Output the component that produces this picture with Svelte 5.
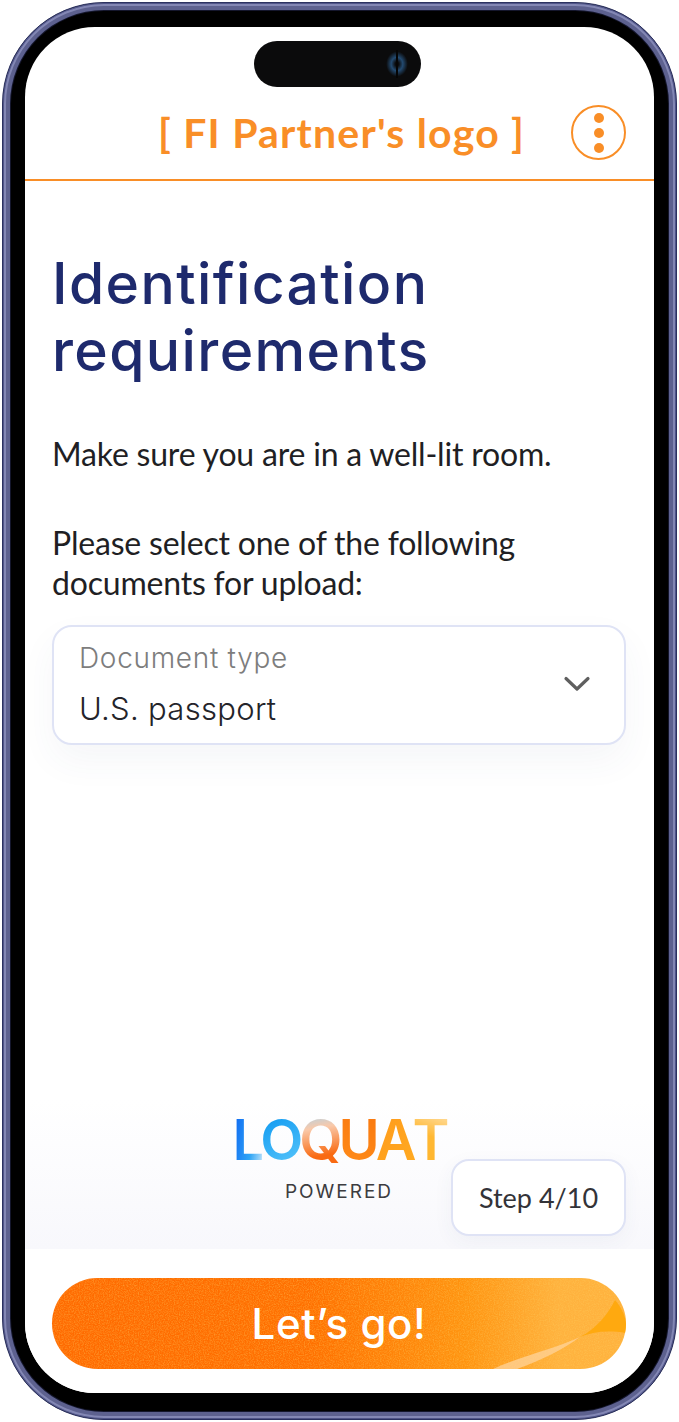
<script>
  // 본인확인 서류 선택 화면
  let docType = 'U.S. passport';
  const step = { current: 4, total: 10 };

  const logoLetters = [
    { ch: 'L', cls: 'l-blue' },
    { ch: 'O', cls: 'l-cyan' },
    { ch: 'Q', cls: 'l-mix' },
    { ch: 'U', cls: 'l-orange' },
    { ch: 'A', cls: 'l-amber' },
    { ch: 'T', cls: 'l-yellow' }
  ];
</script>

<div class="page">
  <div class="phone">
    <div class="screen">
      <!-- dynamic island -->
      <div class="island"><span class="lens"></span></div>

      <header class="top">
        <span class="partner">[ FI Partner's logo ]</span>
        <button class="kebab" aria-label="menu">
          <i></i><i></i><i></i>
        </button>
      </header>

      <main class="content">
        <h1 class="title">Identification requirements</h1>
        <p class="lead">Make sure you are in a well-lit room.</p>
        <p class="ask">Please select one of the following documents for upload:</p>

        <div class="select">
          <div class="select-text">
            <span class="select-label">Document type</span>
            <span class="select-value">{docType}</span>
          </div>
          <svg class="chevron" width="28" height="18" viewBox="0 0 28 18" fill="none">
            <path d="M3 3.5 L14 14 L25 3.5" stroke="#5f5f5f" stroke-width="3.2" stroke-linecap="round" stroke-linejoin="round" />
          </svg>
        </div>

        <div class="bottom-row">
          <div></div>
          <div class="brand">
            <div class="wordmark">
              {#each logoLetters as l}
                <span class={l.cls}>{l.ch}</span>
              {/each}
            </div>
            <span class="powered">POWERED</span>
          </div>
          <div class="step">Step {step.current}/{step.total}</div>
        </div>
      </main>

      <footer class="actions">
        <button class="go">
          <svg class="go-bg" viewBox="0 0 574 91" preserveAspectRatio="none" aria-hidden="true">
            <defs>
              <filter id="grain">
                <feTurbulence type="fractalNoise" baseFrequency="0.8" numOctaves="2" seed="4" />
                <feColorMatrix values="0 0 0 0 1  0 0 0 0 0.62  0 0 0 0 0.12  0 0 0 1.8 -0.66" />
              </filter>
            </defs>
            <rect width="574" height="91" filter="url(#grain)" opacity="0.45" />
            <path d="M528 59 C545 50 556 36 563 22 C570 30 574 40 574 46 L574 55 C555 52 540 54 528 59 Z" fill="#ffa90f" />
            <path d="M441 91 C470 78 505 70 528 59 C510 72 490 82 465 91 Z" fill="#ffd39a" opacity="0.75" />
          </svg>
          <span class="go-label">Let’s go!</span>
        </button>
      </footer>
    </div>
  </div>
</div>

<style>
  :global(body) {
    margin: 0;
    background: #fff;
  }

  .page {
    width: 679px;
    height: 1422px;
    padding: 2px;
    box-sizing: border-box;
  }

  .phone {
    height: 100%;
    box-sizing: border-box;
    padding: 24px 22px 26px 22px;
    border-radius: 102px;
    background: #000;
    border: 1px solid #2b3160;
    box-shadow:
      inset 0 0 0 1px #4f5488,
      inset 0 0 0 3px #8387b4,
      inset 0 0 0 7px #5d618f,
      inset 0 0 0 8px #14162c;
  }

  .screen {
    position: relative;
    height: 100%;
    background: #fff;
    border-radius: 70px;
    overflow: hidden;
    display: flex;
    flex-direction: column;
    font-family: "Lato", "Open Sans", sans-serif;
  }

  .island {
    position: absolute;
    top: 14px;
    left: 229px;
    width: 167px;
    height: 46px;
    border-radius: 23px;
    background: #0b0b0c;
  }

  .lens {
    position: absolute;
    right: 12px;
    top: 9px;
    width: 24px;
    height: 28px;
    border-radius: 50%;
    background:
      linear-gradient(90deg, transparent 45%, #050505 45% 55%, transparent 55%),
      radial-gradient(ellipse closest-side, #0b0b0c 15%, #234a70 48%, #0b0b0c 90%);
  }

  .top {
    height: 154px;
    flex: none;
    box-sizing: border-box;
    border-bottom: 2px solid #f98e27;
    padding: 76px 28px 0 133px;
    display: flex;
    align-items: flex-start;
    justify-content: space-between;
  }

  .partner {
    font-size: 41px;
    line-height: 60px;
    font-weight: 700;
    color: #f98e27;
    letter-spacing: 1.2px;
    white-space: nowrap;
  }

  .kebab {
    width: 55px;
    height: 55px;
    margin-top: 2px;
    padding: 0;
    box-sizing: border-box;
    border: 2px solid #f98e27;
    border-radius: 50%;
    background: #fff;
    display: flex;
    flex-direction: column;
    align-items: center;
    justify-content: center;
    gap: 5px;
  }

  .kebab i {
    width: 10px;
    height: 10px;
    border-radius: 50%;
    background: #f98e27;
  }

  .content {
    flex: 1;
    min-height: 0;
    padding: 0 28px 13px 27px;
    display: flex;
    flex-direction: column;
    background: linear-gradient(#fff 0, #fff 86%, #f8f8fc 100%);
  }

  .title {
    margin: 69px 0 0;
    font-size: 57px;
    line-height: 67px;
    font-weight: 500;
    color: #1e2a6d;
    font-family: "Inter", sans-serif;
    letter-spacing: 1.4px;
    max-width: 460px;
  }

  .lead,
  .ask {
    color: #1f1f24;
    font-size: 32px;
    line-height: 40px;
    letter-spacing: -0.2px;
  }

  .lead {
    margin: 50px 0 0;
  }

  .ask {
    margin: 49px 0 0;
    max-width: 510px;
  }

  .select {
    margin-top: 22px;
    height: 120px;
    box-sizing: border-box;
    padding: 0 33px 0 25px;
    border: 2px solid #dfe3f5;
    border-radius: 20px;
    background: #fff;
    box-shadow: 0 16px 36px rgba(60, 70, 120, 0.05);
    display: flex;
    align-items: center;
    justify-content: space-between;
  }

  .select-text {
    display: flex;
    flex-direction: column;
    font-family: "Inter", sans-serif;
  }

  .select-label {
    font-size: 28px;
    line-height: 38px;
    font-weight: 300;
    color: #7d7d7d;
    letter-spacing: 0.7px;
    margin-bottom: 13px;
    margin-top: -4px;
  }

  .select-value {
    font-size: 31px;
    line-height: 38px;
    font-weight: 300;
    color: #24242a;
    letter-spacing: 0.3px;
  }

  .chevron {
    margin-bottom: 3px;
  }

  .bottom-row {
    margin-top: auto;
    display: grid;
    grid-template-columns: 1fr auto 1fr;
    align-items: end;
  }

  .brand {
    display: flex;
    flex-direction: column;
    align-items: center;
    margin-bottom: 33px;
  }

  .wordmark {
    display: flex;
    font-family: "Inter", sans-serif;
    font-size: 56px;
    line-height: 56px;
    font-weight: 600;
    letter-spacing: -4px;
  }

  .wordmark span {
    padding-right: 4px;
    margin-right: -4px;
    background-clip: text;
    -webkit-background-clip: text;
    color: transparent;
  }

  .l-blue {
    background-image: linear-gradient(100deg, #0b62f2, #2fa5f5 60%, #d5ecfb);
  }

  .l-cyan {
    background-image: linear-gradient(150deg, #0a96f0, #5cc8fb);
  }

  .l-mix {
    background-image: linear-gradient(170deg, #9dd4f5 0, #f9c9aa 30%, #f96a12 75%);
  }

  .l-orange {
    background-image: linear-gradient(200deg, #f9780f, #ff8c1a);
  }

  .l-amber {
    background-image: linear-gradient(120deg, #ff9a1b, #ffab22);
  }

  .l-yellow {
    background-image: linear-gradient(200deg, #ffe2ad, #ffb833 45%, #ffb52c);
  }

  .powered {
    margin-top: 13px;
    font-size: 19px;
    line-height: 22px;
    letter-spacing: 2px;
    color: #3c3c40;
    font-family: "Inter", sans-serif;
  }

  .step {
    justify-self: end;
    width: 175px;
    height: 77px;
    box-sizing: border-box;
    border: 2px solid #dfe3f5;
    border-radius: 18px;
    background: #fff;
    box-shadow: 0 6px 20px rgba(60, 70, 120, 0.05);
    display: flex;
    align-items: center;
    justify-content: center;
    font-size: 27px;
    color: #333338;
  }

  .actions {
    flex: none;
    height: 144px;
    box-sizing: border-box;
    padding: 29px 28px 0 27px;
    background: #fff;
  }

  .go {
    position: relative;
    width: 100%;
    height: 91px;
    padding: 0;
    border: 0;
    border-radius: 46px;
    overflow: hidden;
    background: linear-gradient(90deg, #ff6a00 0, #ff7000 45%, #ff9410 72%, #ffb23e 88%, #ffb23e 100%);
    display: block;
  }

  .go-bg {
    position: absolute;
    inset: 0;
    width: 100%;
    height: 100%;
  }

  .go-label {
    position: relative;
    color: #fff;
    font-family: "Inter", sans-serif;
    font-size: 42px;
    font-weight: 500;
    letter-spacing: 0.6px;
  }
</style>
